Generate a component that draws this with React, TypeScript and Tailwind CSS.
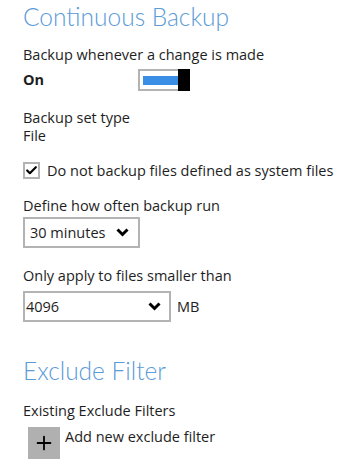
import { Check, Plus } from "lucide-react";

function Chevron() {
  return (
    <svg width="13" height="9" viewBox="0 0 13 9" className="shrink-0">
      <path d="M1.5 1.5 L6.5 6.5 L11.5 1.5" fill="none" stroke="#000" strokeWidth="3" />
    </svg>
  );
}

function Toggle() {
  return (
    <div className="flex h-[22px] w-[52px]">
      <div className="flex flex-1 items-center border-2 border-r-0 border-[#b3b3b3] pl-[3px]">
        <div className="h-[9px] w-full bg-[#3a8ee6]" />
      </div>
      <div className="w-[12px] bg-black" />
    </div>
  );
}

const titleFont = { fontFamily: "Lato, sans-serif" };

export default function App() {
  return (
    <div
      className="h-[469px] w-[360px] overflow-hidden bg-white pl-[23px] text-[14.5px] text-[#1e1e1e]"
      style={{ fontFamily: '"Open Sans", sans-serif' }}
    >
      <h1 className="pt-[1px] text-[24.5px] font-light leading-[32px] text-[#5b9bd8]" style={titleFont}>
        Continuous Backup
      </h1>

      <div className="mt-[12px] leading-[19px]">Backup whenever a change is made</div>
      <div className="mt-[5px] flex items-center">
        <span className="w-[115px] font-bold">On</span>
        <Toggle />
      </div>

      <div className="mt-[17px] leading-[19px]">Backup set type</div>
      <div className="leading-[18px]">File</div>

      <label className="mt-[16px] flex items-center gap-[7px]">
        <span className="flex h-[17px] w-[17px] items-center justify-center border-2 border-[#b3b3b3]">
          <Check size={13} strokeWidth={4} color="#000" />
        </span>
        <span className="leading-[19px]">Do not backup files defined as system files</span>
      </label>

      <div className="mt-[16px] leading-[19px]">Define how often backup run</div>
      <div className="mt-[2px] flex h-[31px] w-[117px] items-center justify-between border-2 border-[#b3b3b3] pl-[5px] pr-[9px]">
        <span>30 minutes</span>
        <Chevron />
      </div>

      <div className="mt-[18px] leading-[19px]">Only apply to files smaller than</div>
      <div className="mt-[6px] flex items-center gap-[6px]">
        <div className="flex h-[31px] w-[148px] items-center justify-between border-2 border-[#b3b3b3] pl-[1px] pr-[8px]">
          <span>4096</span>
          <Chevron />
        </div>
        <span>MB</span>
      </div>

      <h2 className="mt-[33px] text-[24.5px] font-light leading-[32px] text-[#5b9bd8]" style={titleFont}>
        Exclude Filter
      </h2>

      <div className="mt-[14px] leading-[19px]">Existing Exclude Filters</div>
      <div className="mt-[7px] flex items-start gap-[5px] pl-[5px]">
        <div className="flex h-[32px] w-[32px] items-center justify-center bg-[#b0b0b0]">
          <Plus size={22} strokeWidth={2} color="#000" />
        </div>
        <span className="leading-[19px]">Add new exclude filter</span>
      </div>
    </div>
  );
}
